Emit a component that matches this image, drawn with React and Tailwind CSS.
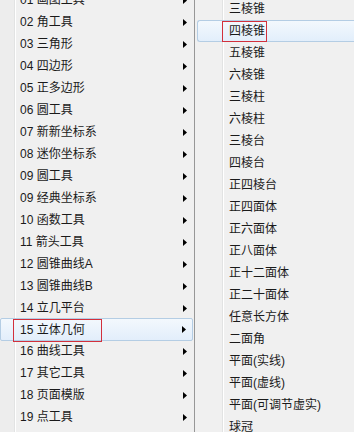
const leftItems = [
  "01 画图工具",
  "02 角工具",
  "03 三角形",
  "04 四边形",
  "05 正多边形",
  "06 圆工具",
  "07 新新坐标系",
  "08 迷你坐标系",
  "09 圆工具",
  "09 经典坐标系",
  "10 函数工具",
  "11 箭头工具",
  "12 圆锥曲线A",
  "13 圆锥曲线B",
  "14 立几平台",
  "15 立体几何",
  "16 曲线工具",
  "17 其它工具",
  "18 页面模版",
  "19 点工具",
]

const rightItems = [
  "三棱锥", "四棱锥", "五棱锥", "六棱锥", "三棱柱", "六棱柱", "三棱台",
  "四棱台", "正四棱台", "正四面体", "正六面体", "正八面体", "正十二面体",
  "正二十面体", "任意长方体", "二面角", "平面(实线)", "平面(虚线)",
  "平面(可调节虚实)", "球冠",
]

function Arrow() {
  return (
    <svg width="4" height="7" viewBox="0 0 4 7" className="block">
      <polygon points="0,0 4,3.5 0,7" fill="#000" />
    </svg>
  )
}

export default function App() {
  const font = { fontFamily: '"Liberation Sans", "Noto Sans CJK SC", sans-serif' }

  return (
    <div className="w-[354px] h-[432px] overflow-hidden flex bg-[#f0f0f0] text-[12px] text-[#1a1a1a]" style={font}>

      {/* 主菜单 */}
      <div className="w-[195px] shrink-0 h-full border-r border-[#979797] bg-[linear-gradient(to_right,#ededed_14px,#e2e3e3_14px,#e2e3e3_15px,#ffffff_15px,#ffffff_16px,#f0f0f0_16px)]">
        <div className="-mt-[11px]">
          {leftItems.map((t) => {
            const active = t.startsWith("15")
            return (
              <div key={t} className="relative h-[22px]">
                {active ? (
                  <div className="h-[23px] -mt-[1px] mr-[1px] flex items-center border border-[#b4cde4] rounded-[2px] bg-[linear-gradient(to_bottom,#f3f8fd,#e2eefb)]">
                    <span className="pl-[19px] flex-1 leading-none">{t}</span>
                    <span className="pr-[6px]"><Arrow /></span>
                  </div>
                ) : (
                  <div className="h-[22px] flex items-center">
                    <span className="pl-[20px] flex-1 leading-none">{t}</span>
                    <span className="pr-[7px]"><Arrow /></span>
                  </div>
                )}
                {active && (
                  <div className="absolute left-[13px] top-[1px] w-[89px] h-[23px] border border-[#d2303c]" />
                )}
              </div>
            )
          })}
        </div>
      </div>

      {/* 子菜单 */}
      <div className="flex-1 h-full bg-[linear-gradient(to_right,#f0f0f0_27px,#e2e3e3_27px,#e2e3e3_28px,#ffffff_28px,#ffffff_29px,#f0f0f0_29px)]">
        <div className="-mt-[2px]">
          {rightItems.map((t) => {
            const active = t === "四棱锥"
            return (
              <div key={t} className="relative h-[22px]">
                {active ? (
                  <div className="h-[22px] ml-[2px] flex items-center border border-r-0 border-[#b4cde4] rounded-l-[3px] bg-[linear-gradient(to_bottom,#f3f8fd,#e2eefb)]">
                    <span className="pl-[31px] leading-none">{t}</span>
                  </div>
                ) : (
                  <div className="h-[22px] flex items-center">
                    <span className="pl-[34px] leading-none">{t}</span>
                  </div>
                )}
                {active && (
                  <div className="absolute left-[27px] top-[1px] w-[45px] h-[21px] border border-[#d2303c]" />
                )}
              </div>
            )
          })}
        </div>
      </div>

    </div>
  )
}
